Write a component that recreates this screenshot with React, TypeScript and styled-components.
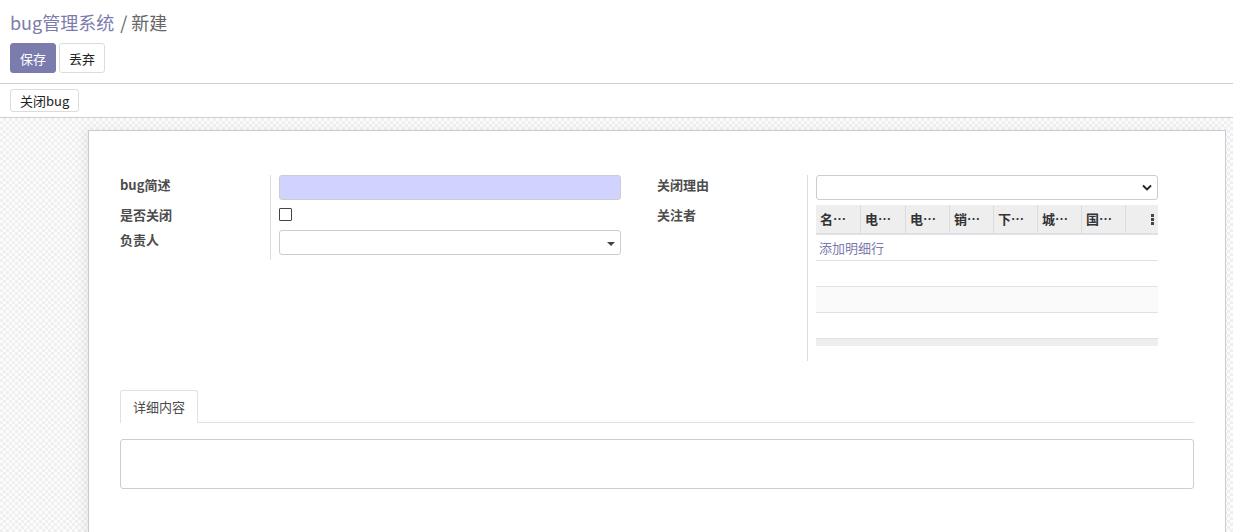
import React from 'react';
import styled, { createGlobalStyle } from 'styled-components';

const purple = '#7c7bad';

const GlobalStyle = createGlobalStyle`
  html, body {
    margin: 0;
    padding: 0;
    background: #fff;
  }
  body {
    font-family: "Noto Sans CJK SC", "Noto Sans", sans-serif;
    font-size: 13px;
    color: #4c4c4c;
  }
  * { box-sizing: border-box; }
`;

const Page = styled.div`
  display: flex;
  flex-direction: column;
  height: 532px;
  overflow: hidden;
`;

const ControlPanel = styled.div`
  padding: 10px 10px 10px;
  border-bottom: 1px solid #cfcfcf;
`;

const Breadcrumb = styled.div`
  font-size: 18px;
  line-height: 24px;
  color: ${purple};
  span { color: #666; margin-left: 2px; }
`;

const Buttons = styled.div`
  display: flex;
  gap: 3px;
  margin-top: 9px;
`;

const Btn = styled.button<{ $primary?: boolean; $small?: boolean }>`
  font-family: inherit;
  font-size: 13px;
  height: ${p => (p.$small ? 23 : 30)}px;
  padding: 0 9px;
  border-radius: 3px;
  border: 1px solid ${p => (p.$primary ? purple : '#dcdcdc')};
  background: ${p => (p.$primary ? purple : '#fff')};
  color: ${p => (p.$primary ? '#fff' : '#222')};
  line-height: 1;
`;

const StatusBar = styled.div`
  padding: 5px 10px;
  border-bottom: 1px solid #cfcfcf;
  display: flex;
`;

const Canvas = styled.div`
  flex: 1;
  padding: 12px 7px 0 88px;
  background-color: #fbfbfb;
  background-image: repeating-conic-gradient(#efefef 0 25%, #fcfcfc 0 50%);
  background-size: 6px 6px;
`;

const Sheet = styled.div`
  background: #fff;
  border: 1px solid #c9c8d6;
  box-shadow: -4px 0 10px rgba(0, 0, 0, 0.06);
  padding: 44px 31px 40px;
  min-height: 420px;
`;

const Group = styled.div`
  display: grid;
  grid-template-columns: 1fr 1fr;
`;

const Column = styled.div`
  display: grid;
  grid-template-columns: 151px 1fr;
  align-content: start;
`;

const Label = styled.div<{ $pad?: number }>`
  font-weight: bold;
  color: #4c4c4c;
  line-height: 20px;
  border-right: 1px solid #dcdcdc;
  padding-bottom: ${p => p.$pad ?? 5}px;
`;

const Field = styled.div<{ $pad?: number }>`
  padding: 0 36px ${p => p.$pad ?? 5}px 8px;
`;

const Input = styled.div<{ $required?: boolean }>`
  height: 25px;
  border: 1px solid #cdcdcd;
  border-radius: 3px;
  background: ${p => (p.$required ? '#d2d2ff' : '#fff')};
  display: flex;
  align-items: center;
  justify-content: flex-end;
  padding-right: 5px;
`;

const Check = styled.div`
  width: 13px;
  height: 13px;
  margin-top: 3px;
  margin-bottom: 4px;
  border: 1px solid #444;
  border-radius: 1px;
`;

const Caret = styled.div`
  width: 0;
  height: 0;
  border-left: 4px solid transparent;
  border-right: 4px solid transparent;
  border-top: 4px solid #444;
  margin-top: 2px;
`;

const Table = styled.div`
  width: 100%;
`;

const HeadRow = styled.div`
  display: grid;
  grid-template-columns: 45px 45px 44px 44px 44px 44px 44px 1fr;
  background: #eee;
  height: 30px;
  border-bottom: 2px solid #dee2e6;
`;

const HeadCell = styled.div`
  font-weight: bold;
  color: #333;
  padding-left: 4px;
  line-height: 28px;
  border-right: 1px solid #dcdcdc;
  &:last-child {
    border-right: none;
    display: flex;
    justify-content: flex-end;
    align-items: center;
    padding-right: 4px;
  }
`;

const BodyRow = styled.div<{ $alt?: boolean }>`
  height: 26px;
  border-bottom: 1px solid #dee2e6;
  background: ${p => (p.$alt ? '#fafafa' : '#fff')};
  padding-left: 3px;
  line-height: 25px;
`;

const AddLine = styled.span`
  color: ${purple};
`;

const Foot = styled.div`
  height: 7px;
  background: #eee;
`;

const Notebook = styled.div`
  margin-top: 29px;
`;

const TabBar = styled.div`
  display: flex;
  border-bottom: 1px solid #dee2e6;
`;

const Tab = styled.div`
  height: 33px;
  padding: 0 12px;
  line-height: 32px;
  border: 1px solid #dee2e6;
  border-bottom: none;
  border-radius: 3px 3px 0 0;
  background: #fff;
  margin-bottom: -1px;
  color: #4c4c4c;
`;

const TextArea = styled.div`
  margin-top: 16px;
  height: 50px;
  border: 1px solid #cdcdcd;
  border-radius: 3px;
`;

const Dots = () => (
  <svg width="3" height="11" viewBox="0 0 3 11">
    <rect x="0" y="0" width="3" height="3" fill="#444" />
    <rect x="0" y="4" width="3" height="3" fill="#444" />
    <rect x="0" y="8" width="3" height="3" fill="#444" />
  </svg>
);

const Chevron = () => (
  <svg width="10" height="7" viewBox="0 0 10 7">
    <path d="M1 1.5 L5 5.5 L9 1.5" fill="none" stroke="#222" strokeWidth="1.8" />
  </svg>
);

const columns = ['名…', '电…', '电…', '销…', '下…', '城…', '国…'];

export default function App() {
  return (
    <Page>
      <GlobalStyle />
      <ControlPanel>
        <Breadcrumb>
          bug管理系统 <span>/ 新建</span>
        </Breadcrumb>
        <Buttons>
          <Btn $primary>保存</Btn>
          <Btn>丢弃</Btn>
        </Buttons>
      </ControlPanel>
      <StatusBar>
        <Btn $small>关闭bug</Btn>
      </StatusBar>
      <Canvas>
        <Sheet>
          <Group>
            <Column>
              <Label>bug简述</Label>
              <Field>
                <Input $required />
              </Field>
              <Label>是否关闭</Label>
              <Field>
                <Check />
              </Field>
              <Label>负责人</Label>
              <Field>
                <Input>
                  <Caret />
                </Input>
              </Field>
            </Column>
            <Column>
              <Label>关闭理由</Label>
              <Field>
                <Input>
                  <Chevron />
                </Input>
              </Field>
              <Label $pad={15}>关注者</Label>
              <Field $pad={15}>
                <Table>
                  <HeadRow>
                    {columns.map((c, i) => (
                      <HeadCell key={i}>{c}</HeadCell>
                    ))}
                    <HeadCell>
                      <Dots />
                    </HeadCell>
                  </HeadRow>
                  <BodyRow>
                    <AddLine>添加明细行</AddLine>
                  </BodyRow>
                  <BodyRow />
                  <BodyRow $alt />
                  <BodyRow />
                  <Foot />
                </Table>
              </Field>
            </Column>
          </Group>
          <Notebook>
            <TabBar>
              <Tab>详细内容</Tab>
            </TabBar>
            <TextArea />
          </Notebook>
        </Sheet>
      </Canvas>
    </Page>
  );
}
